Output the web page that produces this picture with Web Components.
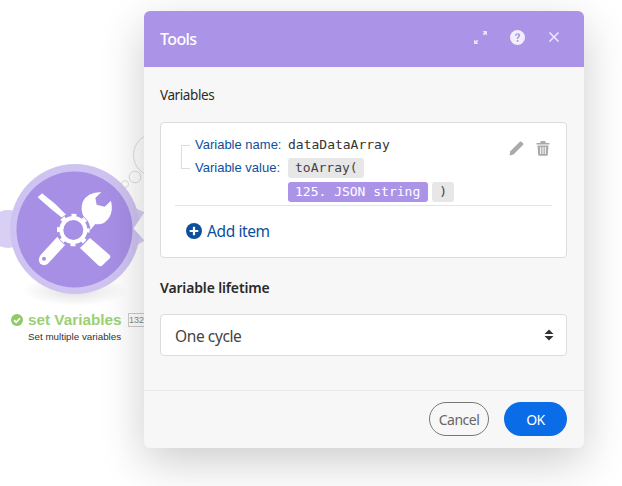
<!DOCTYPE html>
<html>
<head>
<meta charset="utf-8">
<title>Tools</title>
<style>
html,body{margin:0;padding:0;background:#fff;}
body{width:622px;height:486px;overflow:hidden;font-family:"Noto Sans",sans-serif;}
</style>
</head>
<body>
<scenario-canvas>
  <tool-node slot="canvas" title-text="set Variables" sub-text="Set multiple variables" count="132"></tool-node>
  <tool-modal heading="Tools">
    <section-label>Variables</section-label>
    <var-card>
      <var-row label="Variable name:"><span>dataDataArray</span></var-row>
      <var-row label="Variable value:">
        <var-pill>toArray(</var-pill>
        <var-pill kind="data">125. JSON string</var-pill>
        <var-pill>)</var-pill>
      </var-row>
    </var-card>
    <section-label bold>Variable lifetime</section-label>
    <life-select>One cycle</life-select>
    <modal-button slot="footer" kind="ghost">Cancel</modal-button>
    <modal-button slot="footer" kind="primary">OK</modal-button>
  </tool-modal>
</scenario-canvas>

<script>
class ScenarioCanvas extends HTMLElement{
  constructor(){
    super();
    this.root = this.attachShadow({mode:'open'});
  }
  connectedCallback(){
    this.root.innerHTML = `
    <style>
    :host{display:block;position:relative;width:622px;height:486px;padding:11px 0 0 144px;box-sizing:border-box;}
    </style>
    <slot name="canvas"></slot>
    <slot></slot>`;
  }
}

class ToolNode extends HTMLElement{
  constructor(){
    super();
    this.root = this.attachShadow({mode:'open'});
  }
  connectedCallback(){
    const title = this.getAttribute('title-text');
    const sub = this.getAttribute('sub-text');
    const count = this.getAttribute('count');
    this.root.innerHTML = `
    <style>
    :host{display:block;position:absolute;left:0;top:130px;width:144px;height:225px;font-family:"Liberation Sans",sans-serif;}
    svg.art{position:absolute;left:0;top:0;}
    .title{position:absolute;left:11px;top:181px;display:flex;align-items:center;gap:4px;color:#9bd174;font-weight:700;font-size:15.300px;line-height:18px;white-space:nowrap;}
    .count{position:absolute;left:128px;top:183px;width:16px;height:14px;box-sizing:border-box;border:1px solid #ccc;border-right:0;color:#888;font-size:9px;line-height:12px;overflow:hidden;}
    .sub{position:absolute;left:28px;top:201px;font-size:9.800px;line-height:12px;color:#333;white-space:nowrap;}
    </style>
    <svg class="art" width="144" height="180" viewBox="0 130 144 180">
      <defs>
        <radialGradient id="sh"><stop offset="0" stop-color="#000" stop-opacity=".12"/><stop offset="1" stop-color="#000" stop-opacity="0"/></radialGradient>
      </defs>
      <ellipse cx="75" cy="291" rx="52" ry="15" fill="url(#sh)"/>
      <circle cx="155" cy="155" r="21.500" fill="#fff" stroke="#ddd" stroke-width="1"/>
      <circle cx="135" cy="177" r="5.800" fill="#fff" stroke="#ddd" stroke-width="1"/>
      <circle cx="125" cy="184" r="3.500" fill="#fff" stroke="#ddd" stroke-width="1"/>
      <circle cx="8" cy="229" r="19" fill="#d8cff4"/>
      <path d="M128 205l16 7v29l-16 9z" fill="#d8cff4"/>
      <circle cx="75" cy="229" r="65" fill="#cfc4f1"/>
      <path d="M145 211.500L133.500 228.500 145 241z" fill="#fff"/>
      <circle cx="74.500" cy="229.500" r="58" fill="#a78fe6"/>
      <g transform="translate(30 180) scale(.33333)" fill="#fff">
        <path d="M23 52L36 40 76 72 112 108 102 118 64 88z"/>
        <path d="M82 170L106 194 55 250Q42 262 30 250 22 238 32 225z"/>
        <circle cx="42" cy="236" r="6" fill="#a78fe6"/>
        <path d="M150 204L180 174 238 224Q244 230 238 236L216 257Q210 261 204 255z"/>
        <path d="M214 36Q172 36 158 66 150 90 162 112L146 126 176 156 196 132Q222 138 238 112 250 92 243 62L224 80 200 74 196 54z"/>
        <circle cx="130" cy="150" r="51" fill="#a78fe6"/>
        <circle cx="130" cy="150" r="36" fill="none" stroke="#fff" stroke-width="12"/>
        <circle cx="130" cy="150" r="44.500" fill="none" stroke="#fff" stroke-width="9" stroke-dasharray="15 19.950" stroke-dashoffset="7"/>
      </g>
    </svg>
    <div class="title">
      <svg width="12" height="12" viewBox="0 0 12 12"><circle cx="6" cy="6" r="6" fill="#8fc96a"/><path d="M3 6.200l2.100 2.100L9 4.300" fill="none" stroke="#fff" stroke-width="1.800"/></svg>
      <span style="margin-left:1px">${title}</span>
    </div>
    <div class="count">${count}</div>
    <div class="sub">${sub}</div>`;
  }
}

class ToolModal extends HTMLElement{
  constructor(){
    super();
    this.root = this.attachShadow({mode:'open'});
  }
  connectedCallback(){
    this.root.innerHTML = `
    <style>
    :host{display:flex;flex-direction:column;position:relative;width:440px;height:437px;background:#f7f7f7;border-radius:6px;box-shadow:0 14px 45px rgba(0,0,0,.2);font-family:"Noto Sans",sans-serif;overflow:hidden;}
    header{flex:none;height:56px;box-sizing:border-box;background:#ab94e8;display:flex;align-items:center;padding:0 23px 0 16px;color:#fff;}
    h1{flex:1;margin:0;font-size:16px;font-weight:500;letter-spacing:-.6px;}
    .icons{display:flex;align-items:center;gap:22px;margin-top:-4px;}
    .icons svg{display:block;}
    main{flex:1;padding:18px 17px 0 16px;}
    footer{flex:none;height:58px;box-sizing:border-box;border-top:1px solid #e9e9e9;display:flex;justify-content:flex-end;align-items:flex-start;gap:15px;padding:11px 17px 0 0;}
    </style>
    <header>
      <h1>${this.getAttribute('heading')}</h1>
      <div class="icons">
        <svg width="15" height="15" viewBox="0 0 15 15" fill="#e9e2fa"><path d="M9.500 1h4.500v4.500l-1.600-1.600-1.400 1.400-1.300-1.300 1.400-1.400zM5.500 14H1V9.500l1.600 1.600 1.400-1.400 1.300 1.300-1.400 1.400z"/></svg>
        <svg width="15" height="15" viewBox="0 0 15 15"><circle cx="7.500" cy="7.500" r="7.500" fill="#f2eefc"/><path d="M5 5.800c0-1.600 1.100-2.500 2.600-2.500s2.600.9 2.600 2.100c0 1.900-2 1.800-2 3.500H6.800c0-2.300 1.700-2.300 1.700-3.400 0-.5-.3-.9-.9-.9-.6 0-1 .4-1 1.100zM6.800 9.900h1.600v1.800H6.800z" fill="#ab94e8"/></svg>
        <svg width="14" height="14" viewBox="0 0 14 14" stroke="#eee9fb" stroke-width="1.500" fill="none"><path d="M2.500 2.500l9 9M11.500 2.500l-9 9"/></svg>
      </div>
    </header>
    <main><slot></slot></main>
    <footer><slot name="footer"></slot></footer>`;
  }
}

class SectionLabel extends HTMLElement{
  constructor(){
    super();
    this.root = this.attachShadow({mode:'open'});
  }
  connectedCallback(){
    const bold = this.hasAttribute('bold');
    this.root.innerHTML = `
    <style>
    :host{display:block;line-height:20px;color:#2a2a2a;
      font-size:${bold ? 14 : 13.5}px;letter-spacing:${bold ? '-.15px' : '-.4px'};font-weight:${bold ? 600 : 400};margin:${bold ? '20px 0 16px' : '0 0 17px'};}
    </style>
    <slot></slot>`;
  }
}

class VarCard extends HTMLElement{
  constructor(){
    super();
    this.root = this.attachShadow({mode:'open'});
  }
  connectedCallback(){
    this.root.innerHTML = `
    <style>
    :host{display:block;position:relative;height:136px;box-sizing:border-box;background:#fff;border:1px solid #dcdcdc;border-radius:4px;}
    .rows{display:flex;flex-direction:column;gap:3px;margin:0 14px;padding:12px 0 3px 20px;border-bottom:1px solid #e4e4e4;height:67px;box-sizing:content-box;}
    .bracket{position:absolute;left:20px;top:22px;width:8px;height:22px;border:1px solid #ddd;border-right:0;}
    .actions{position:absolute;right:16px;top:17px;display:flex;gap:12px;}
    .actions svg{display:block;}
    .add{display:flex;align-items:center;gap:5px;margin:14px 0 0 25px;color:#0b4f9e;font-size:15.500px;letter-spacing:-.4px;line-height:22px;}
    </style>
    <div class="bracket"></div>
    <div class="actions">
      <svg width="15" height="16" viewBox="0 0 15 16" fill="#aaa"><path d="M0.500 15.500l.8-4.200L10.800 1.800c.5-.5 1.200-.5 1.700 0l1.500 1.500c.5.5.5 1.200 0 1.700L4.500 14.500z"/></svg>
      <svg width="14" height="16" viewBox="0 0 14 16" fill="#aaa"><path fill-rule="evenodd" d="M0.500 3h3.500l1-2h4l1 2h3.500v1.500h-13zM1.500 5.500h11l-.7 9.300c0 .5-.5 1-1 1H3.200c-.5 0-1-.5-1-1zM4.200 7v7h1V7zM6.500 7v7h1V7zM8.800 7v7h1V7z"/></svg>
    </div>
    <div class="rows"><slot></slot></div>
    <div class="add">
      <svg width="16" height="16" viewBox="0 0 16 16"><circle cx="8" cy="8" r="8" fill="#0b4f9e"/><path d="M8 3.700v8.600M3.700 8h8.600" stroke="#fff" stroke-width="2.200"/></svg>
      <span>Add item</span>
    </div>`;
  }
}

class VarRow extends HTMLElement{
  constructor(){
    super();
    this.root = this.attachShadow({mode:'open'});
  }
  connectedCallback(){
    this.root.innerHTML = `
    <style>
    :host{display:flex;align-items:flex-start;}
    .label{flex:none;width:93px;font:13px/20px "Liberation Sans",sans-serif;color:#0b4f9e;}
    .value{display:flex;flex-wrap:wrap;gap:4px;width:170px;font:13px/20px "DejaVu Sans Mono",monospace;color:#333;}
    </style>
    <div class="label">${this.getAttribute('label')}</div>
    <div class="value"><slot></slot></div>`;
  }
}

class VarPill extends HTMLElement{
  constructor(){
    super();
    this.root = this.attachShadow({mode:'open'});
  }
  connectedCallback(){
    const data = this.getAttribute('kind') === 'data';
    this.root.innerHTML = `
    <style>
    :host{display:inline-block;height:20px;padding:${data ? '0 8px 0 7px' : '0 6.5px 0 7px'};border-radius:3px;font:13px/20px "DejaVu Sans Mono",monospace;white-space:nowrap;
      background:${data ? '#ab94e8' : '#e7e7e7'};color:${data ? '#fff' : '#444'};}
    </style>
    <slot></slot>`;
  }
}

class LifeSelect extends HTMLElement{
  constructor(){
    super();
    this.root = this.attachShadow({mode:'open'});
  }
  connectedCallback(){
    this.root.innerHTML = `
    <style>
    :host{display:flex;align-items:center;justify-content:space-between;height:42px;box-sizing:border-box;background:#fff;border:1px solid #dcdcdc;border-radius:4px;padding:2px 12px 0 14px;font-size:15.500px;letter-spacing:-.4px;color:#444;}
    svg{display:block;margin-top:-3px;}
    </style>
    <slot></slot>
    <svg width="10" height="12" viewBox="0 0 10 12" fill="#333"><path d="M5 0.500l4.500 4.500h-9zM5 11.500L.5 7h9z"/></svg>`;
  }
}

class ModalButton extends HTMLElement{
  constructor(){
    super();
    this.root = this.attachShadow({mode:'open'});
  }
  connectedCallback(){
    const primary = this.getAttribute('kind') === 'primary';
    this.root.innerHTML = `
    <style>
    :host{display:flex;align-items:center;justify-content:center;height:34px;box-sizing:border-box;border-radius:17px;font-size:14px;letter-spacing:-.5px;
      width:${primary ? 63 : 60}px;
      background:${primary ? '#0a6ce6' : 'transparent'};
      color:${primary ? '#fff' : '#666'};
      border:${primary ? '0' : '1px solid #777'};}
    </style>
    <slot></slot>`;
  }
}

customElements.define('scenario-canvas',ScenarioCanvas);
customElements.define('tool-node',ToolNode);
customElements.define('tool-modal',ToolModal);
customElements.define('section-label',SectionLabel);
customElements.define('var-card',VarCard);
customElements.define('var-row',VarRow);
customElements.define('var-pill',VarPill);
customElements.define('life-select',LifeSelect);
customElements.define('modal-button',ModalButton);
</script>
</body>
</html>
